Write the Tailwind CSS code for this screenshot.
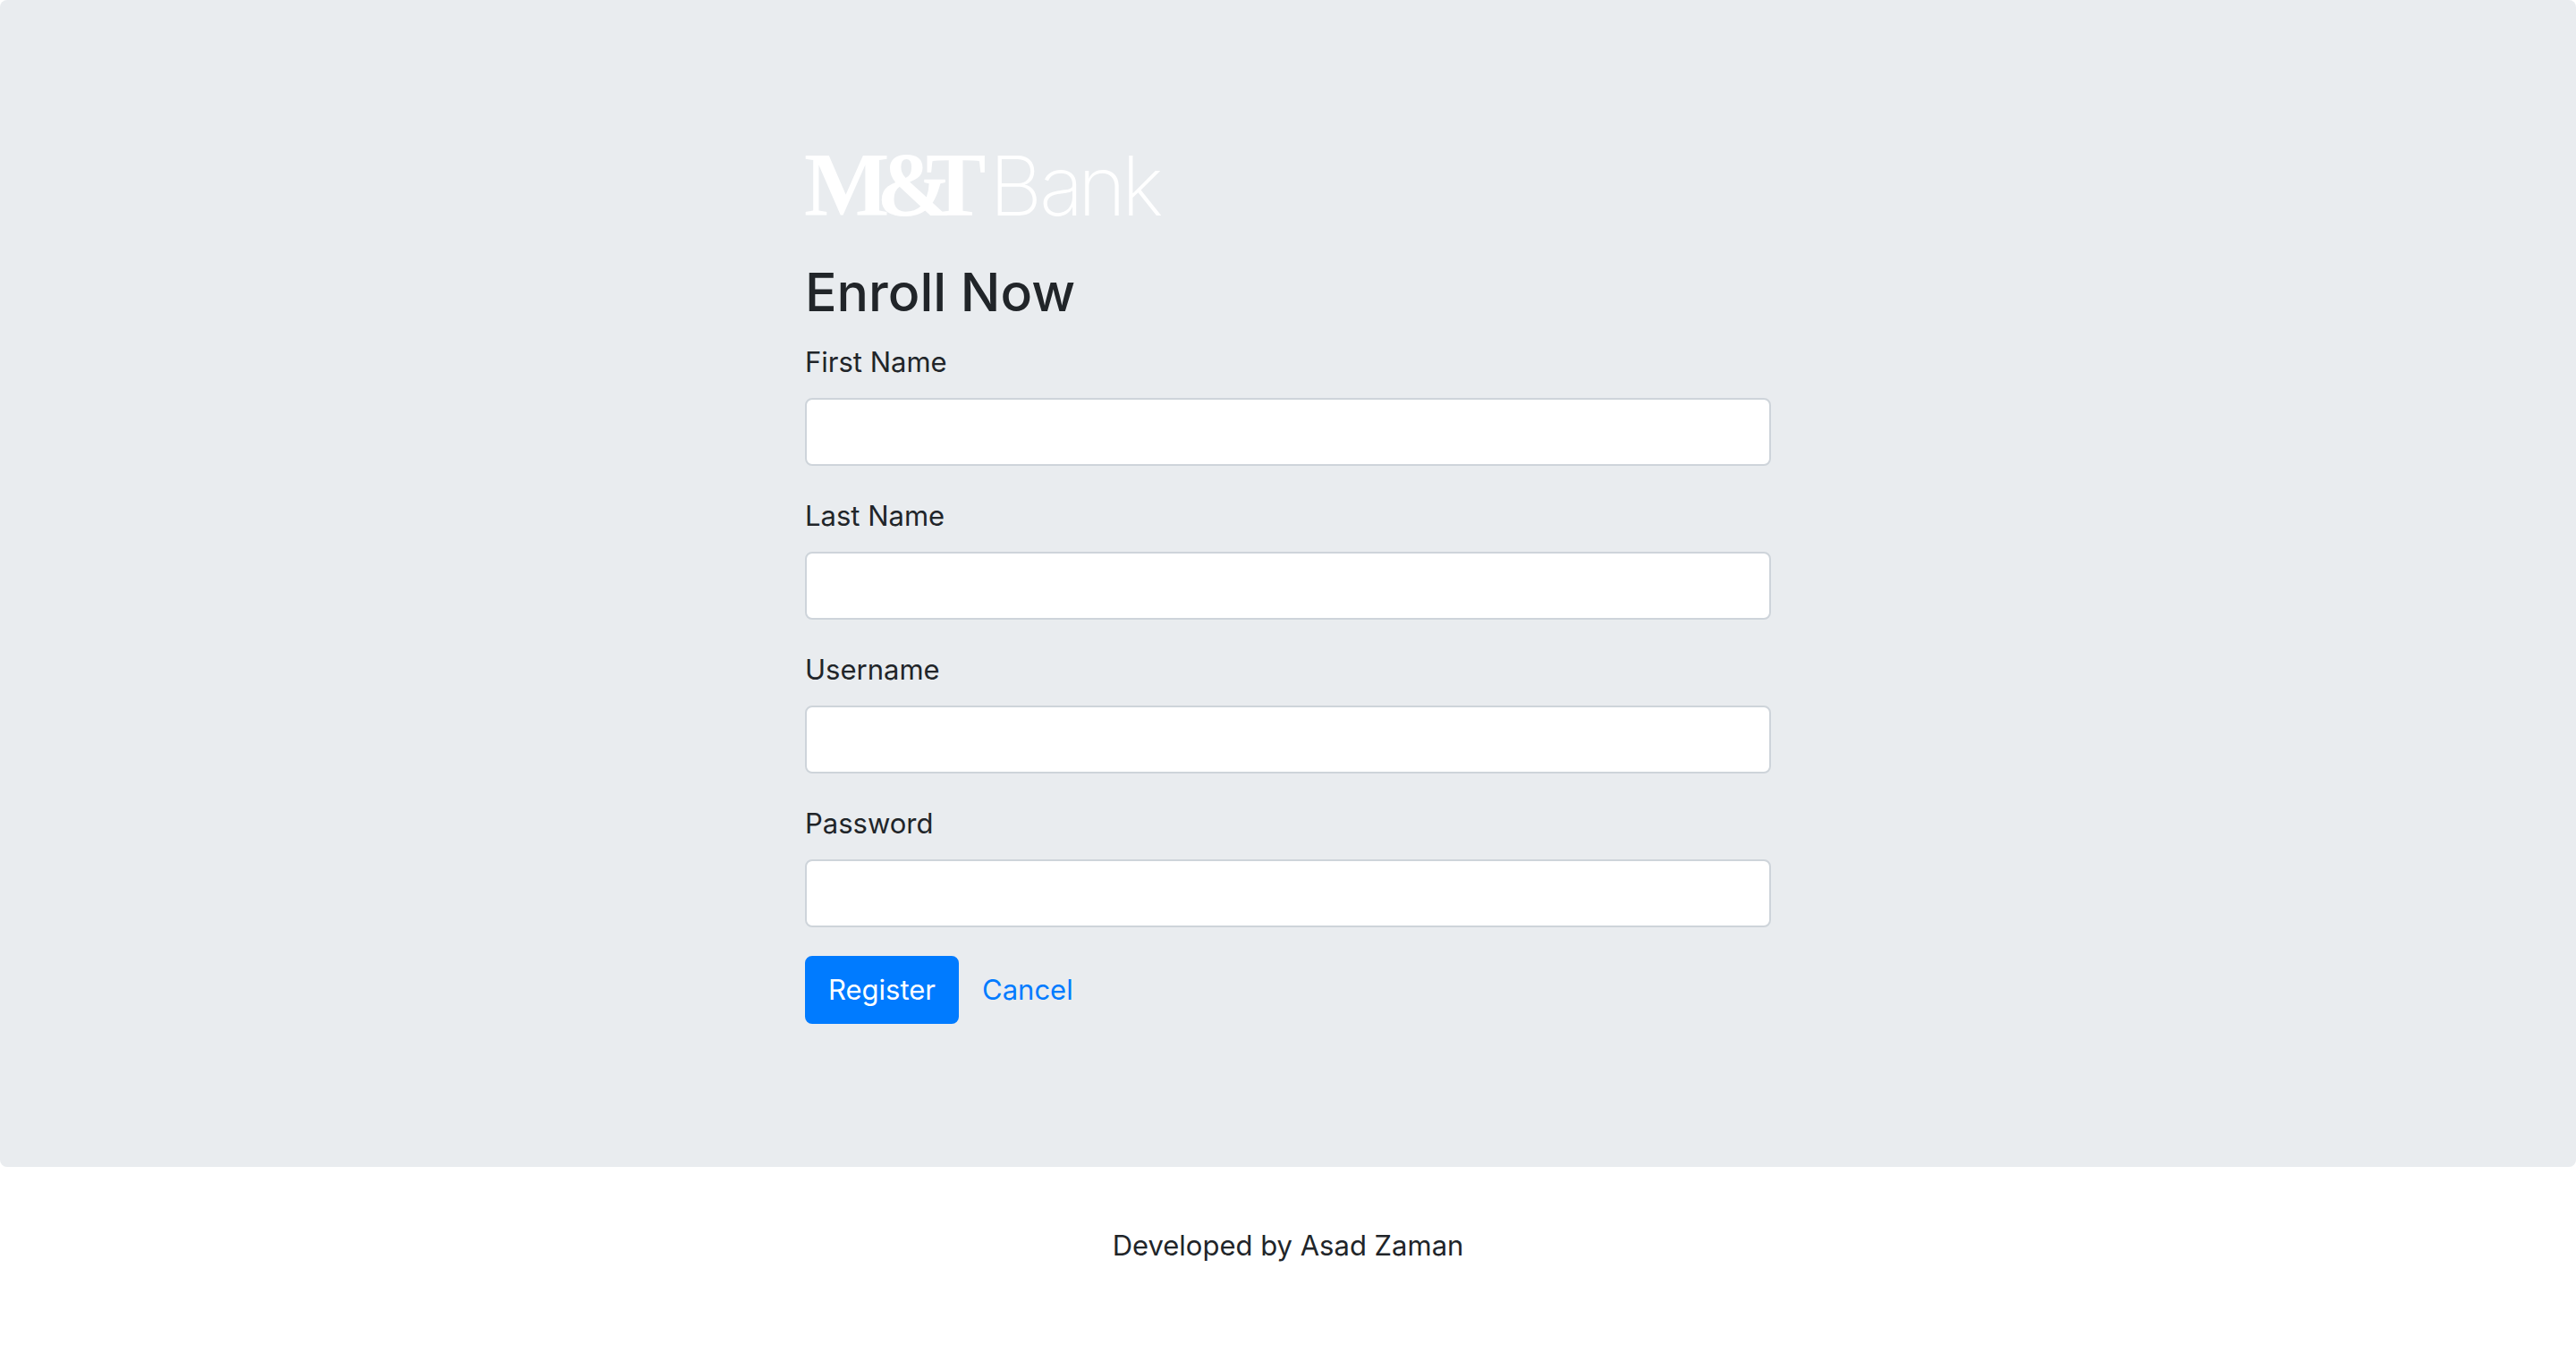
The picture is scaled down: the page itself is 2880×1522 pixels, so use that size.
<!DOCTYPE html>
<html lang="en">
<head>
<meta charset="utf-8">
<meta name="viewport" content="width=device-width, initial-scale=1">
<title>Enroll Now</title>
<script src="https://cdn.jsdelivr.net/npm/@tailwindcss/browser@4"></script>
</head>
<body class="bg-white font-['Inter',sans-serif] text-[31px] leading-12 text-[#212529]">
<main class="rounded-lg bg-[#e9ecef] px-8 pt-32 pb-40">
  <div class="mx-auto max-w-[1080px]">
    <svg class="block h-40 w-[408px]" viewBox="0 0 408 160" fill="#fff" role="img" aria-label="M&amp;T Bank">
      <text x="-1 80 135" y="113" font-family="Liberation Serif, serif" font-weight="700" font-size="101">M&amp;T</text>
      <text x="206 262 305 354" y="113" font-family="Inter, sans-serif" font-weight="200" font-size="92">Bank</text>
    </svg>
    <h2 class="mb-4 text-[59px] leading-[77px] font-medium">Enroll Now</h2>
    <form>
      <div class="mb-8">
        <label for="first" class="mb-4 block">First Name</label>
        <input id="first" type="text" class="block h-19 w-full rounded-lg border-2 border-[#ced4da] bg-white px-6">
      </div>
      <div class="mb-8">
        <label for="last" class="mb-4 block">Last Name</label>
        <input id="last" type="text" class="block h-19 w-full rounded-lg border-2 border-[#ced4da] bg-white px-6">
      </div>
      <div class="mb-8">
        <label for="username" class="mb-4 block">Username</label>
        <input id="username" type="text" class="block h-19 w-full rounded-lg border-2 border-[#ced4da] bg-white px-6">
      </div>
      <div class="mb-8">
        <label for="password" class="mb-4 block">Password</label>
        <input id="password" type="password" class="block h-19 w-full rounded-lg border-2 border-[#ced4da] bg-white px-6">
      </div>
      <div class="flex">
        <button type="submit" class="h-19 rounded-lg border-2 border-[#007bff] bg-[#007bff] px-6 text-white">Register</button>
        <a href="#" class="h-19 border-2 border-transparent px-6 py-3 text-[#007bff]">Cancel</a>
      </div>
    </form>
  </div>
</main>
<footer class="py-16 text-center">Developed by Asad Zaman</footer>
</body>
</html>
